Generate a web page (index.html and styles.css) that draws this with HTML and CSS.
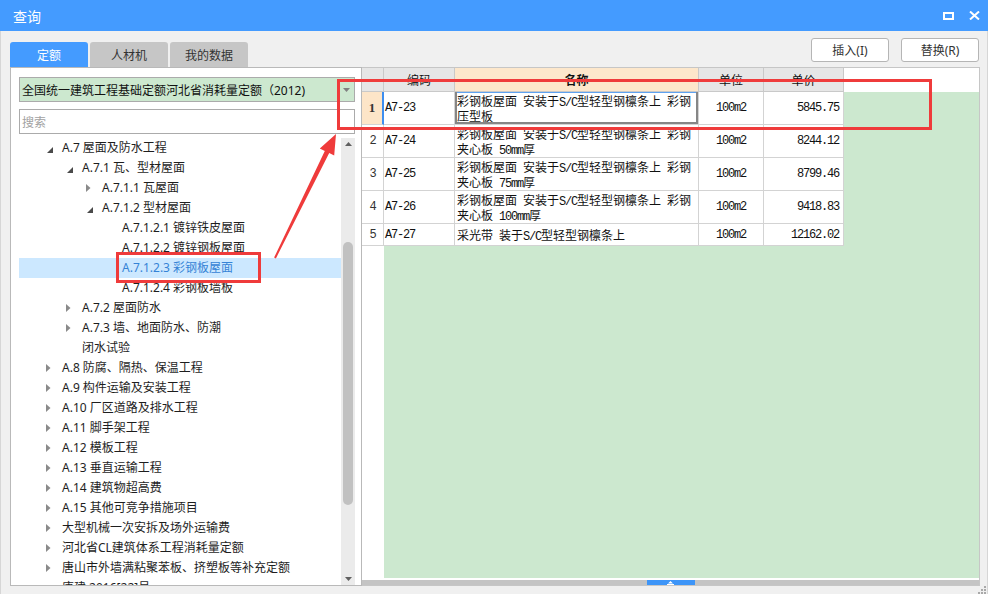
FILE: index.html
```html
<!DOCTYPE html>
<html lang="zh-CN">
<head>
<meta charset="utf-8">
<title>查询</title>
<link rel="stylesheet" href="styles.css">
</head>
<body>
<div class="win">
  <div class="titlebar">
    <span class="title">查询</span>
    <div class="winbtns">
      <svg width="11" height="8" viewBox="0 0 11 8"><rect x="1" y="1" width="9" height="6" fill="none" stroke="#fff" stroke-width="2"/></svg>
      <svg width="11" height="9" viewBox="0 0 11 9"><path d="M1 0.5L10 8.5M10 0.5L1 8.5" stroke="#fff" stroke-width="2" fill="none"/></svg>
    </div>
  </div>

  <div class="toolbar">
    <div class="tabs">
      <div class="tab active">定额</div>
      <div class="tab">人材机</div>
      <div class="tab">我的数据</div>
    </div>
    <div class="actions">
      <button class="btn">插入(I)</button>
      <button class="btn">替换(R)</button>
    </div>
  </div>

  <div class="content">
    <div class="lpanel">
      <div class="select">
        <span class="seltext">全国统一建筑工程基础定额河北省消耗量定额（2012)</span>
        <svg class="caret" width="7" height="4" viewBox="0 0 7 4"><path d="M0 0H7L3.5 4Z" fill="#808080"/></svg>
      </div>
      <div class="search"><span class="ph">搜索</span></div>
      <div class="tree">
        <div class="rows">
          <div class="node lv0"><span class="tw"><svg class="exp" width="6" height="6" viewBox="0 0 6 6"><path d="M6 0V6H0Z" fill="#4a4a4a"/></svg></span><span class="lbl">A.7 屋面及防水工程</span></div>
          <div class="node lv1"><span class="tw"><svg class="exp" width="6" height="6" viewBox="0 0 6 6"><path d="M6 0V6H0Z" fill="#4a4a4a"/></svg></span><span class="lbl">A.7.1 瓦、型材屋面</span></div>
          <div class="node lv2"><span class="tw"><svg width="5" height="8" viewBox="0 0 5 8"><path d="M0 0L4.5 4L0 8Z" fill="#8a8a8a"/></svg></span><span class="lbl">A.7.1.1 瓦屋面</span></div>
          <div class="node lv2"><span class="tw"><svg class="exp" width="6" height="6" viewBox="0 0 6 6"><path d="M6 0V6H0Z" fill="#4a4a4a"/></svg></span><span class="lbl">A.7.1.2 型材屋面</span></div>
          <div class="node lv3"><span class="tw"></span><span class="lbl">A.7.1.2.1 镀锌铁皮屋面</span></div>
          <div class="node lv3"><span class="tw"></span><span class="lbl">A.7.1.2.2 镀锌钢板屋面</span></div>
          <div class="node lv3 selected"><span class="tw"></span><span class="lbl">A.7.1.2.3 彩钢板屋面</span></div>
          <div class="node lv3"><span class="tw"></span><span class="lbl">A.7.1.2.4 彩钢板墙板</span></div>
          <div class="node lv1"><span class="tw"><svg width="5" height="8" viewBox="0 0 5 8"><path d="M0 0L4.5 4L0 8Z" fill="#8a8a8a"/></svg></span><span class="lbl">A.7.2 屋面防水</span></div>
          <div class="node lv1"><span class="tw"><svg width="5" height="8" viewBox="0 0 5 8"><path d="M0 0L4.5 4L0 8Z" fill="#8a8a8a"/></svg></span><span class="lbl">A.7.3 墙、地面防水、防潮</span></div>
          <div class="node lv1"><span class="tw"></span><span class="lbl">闭水试验</span></div>
          <div class="node lv0"><span class="tw"><svg width="5" height="8" viewBox="0 0 5 8"><path d="M0 0L4.5 4L0 8Z" fill="#8a8a8a"/></svg></span><span class="lbl">A.8 防腐、隔热、保温工程</span></div>
          <div class="node lv0"><span class="tw"><svg width="5" height="8" viewBox="0 0 5 8"><path d="M0 0L4.5 4L0 8Z" fill="#8a8a8a"/></svg></span><span class="lbl">A.9 构件运输及安装工程</span></div>
          <div class="node lv0"><span class="tw"><svg width="5" height="8" viewBox="0 0 5 8"><path d="M0 0L4.5 4L0 8Z" fill="#8a8a8a"/></svg></span><span class="lbl">A.10 厂区道路及排水工程</span></div>
          <div class="node lv0"><span class="tw"><svg width="5" height="8" viewBox="0 0 5 8"><path d="M0 0L4.5 4L0 8Z" fill="#8a8a8a"/></svg></span><span class="lbl">A.11 脚手架工程</span></div>
          <div class="node lv0"><span class="tw"><svg width="5" height="8" viewBox="0 0 5 8"><path d="M0 0L4.5 4L0 8Z" fill="#8a8a8a"/></svg></span><span class="lbl">A.12 模板工程</span></div>
          <div class="node lv0"><span class="tw"><svg width="5" height="8" viewBox="0 0 5 8"><path d="M0 0L4.5 4L0 8Z" fill="#8a8a8a"/></svg></span><span class="lbl">A.13 垂直运输工程</span></div>
          <div class="node lv0"><span class="tw"><svg width="5" height="8" viewBox="0 0 5 8"><path d="M0 0L4.5 4L0 8Z" fill="#8a8a8a"/></svg></span><span class="lbl">A.14 建筑物超高费</span></div>
          <div class="node lv0"><span class="tw"><svg width="5" height="8" viewBox="0 0 5 8"><path d="M0 0L4.5 4L0 8Z" fill="#8a8a8a"/></svg></span><span class="lbl">A.15 其他可竞争措施项目</span></div>
          <div class="node lv0"><span class="tw"><svg width="5" height="8" viewBox="0 0 5 8"><path d="M0 0L4.5 4L0 8Z" fill="#8a8a8a"/></svg></span><span class="lbl">大型机械一次安拆及场外运输费</span></div>
          <div class="node lv0"><span class="tw"><svg width="5" height="8" viewBox="0 0 5 8"><path d="M0 0L4.5 4L0 8Z" fill="#8a8a8a"/></svg></span><span class="lbl">河北省CL建筑体系工程消耗量定额</span></div>
          <div class="node lv0"><span class="tw"><svg width="5" height="8" viewBox="0 0 5 8"><path d="M0 0L4.5 4L0 8Z" fill="#8a8a8a"/></svg></span><span class="lbl">唐山市外墙满粘聚苯板、挤塑板等补充定额</span></div>
          <div class="node lv0"><span class="tw"></span><span class="lbl">唐建 2016[22]号</span></div>
        </div>
        <div class="vscroll">
          <div class="sarrow"><svg width="7" height="4" viewBox="0 0 7 4"><path d="M3.5 0L7 4H0Z" fill="#606060"/></svg></div>
          <div class="thumb"></div>
          <div class="sarrow down"><svg width="7" height="4" viewBox="0 0 7 4"><path d="M0 0H7L3.5 4Z" fill="#606060"/></svg></div>
        </div>
      </div>
    </div>

    <div class="rpanel">
      <div class="thead">
        <div class="hc c0"></div>
        <div class="hc c1">编码</div>
        <div class="hc c2 hsel">名称</div>
        <div class="hc c3">单位</div>
        <div class="hc c4">单价</div>
        <div class="hfill"></div>
      </div>
      <div class="tbody">
        <div class="rowset">
          <div class="tr tall">
            <div class="td c0 rn rn-sel">1</div>
            <div class="td c1 m code">A7-23</div>
            <div class="td c2 nm nm-sel"><span class="ln">彩钢板屋面<span class="m"> </span>安装于<span class="m">S/C</span>型轻型钢檩条上<span class="m"> </span>彩钢</span><span class="ln">压型板</span></div>
            <div class="td c3 m ctr">100m2</div>
            <div class="td c4 m rt">5845.75</div>
          </div>
          <div class="tr tall">
            <div class="td c0 rn m">2</div>
            <div class="td c1 m code">A7-24</div>
            <div class="td c2 nm"><span class="ln">彩钢板屋面<span class="m"> </span>安装于<span class="m">S/C</span>型轻型钢檩条上<span class="m"> </span>彩钢</span><span class="ln">夹心板<span class="m"> 50mm</span>厚</span></div>
            <div class="td c3 m ctr">100m2</div>
            <div class="td c4 m rt">8244.12</div>
          </div>
          <div class="tr tall">
            <div class="td c0 rn m">3</div>
            <div class="td c1 m code">A7-25</div>
            <div class="td c2 nm"><span class="ln">彩钢板屋面<span class="m"> </span>安装于<span class="m">S/C</span>型轻型钢檩条上<span class="m"> </span>彩钢</span><span class="ln">夹心板<span class="m"> 75mm</span>厚</span></div>
            <div class="td c3 m ctr">100m2</div>
            <div class="td c4 m rt">8799.46</div>
          </div>
          <div class="tr tall">
            <div class="td c0 rn m">4</div>
            <div class="td c1 m code">A7-26</div>
            <div class="td c2 nm"><span class="ln">彩钢板屋面<span class="m"> </span>安装于<span class="m">S/C</span>型轻型钢檩条上<span class="m"> </span>彩钢</span><span class="ln">夹心板<span class="m"> 100mm</span>厚</span></div>
            <div class="td c3 m ctr">100m2</div>
            <div class="td c4 m rt">9418.83</div>
          </div>
          <div class="tr short">
            <div class="td c0 rn m">5</div>
            <div class="td c1 m code">A7-27</div>
            <div class="td c2 nm one"><span class="ln">采光带<span class="m"> </span>装于<span class="m">S/C</span>型轻型钢檩条上</span></div>
            <div class="td c3 m ctr">100m2</div>
            <div class="td c4 m rt">12162.02</div>
          </div>
        </div>
      </div>
      <div class="hgap"></div>
      <div class="hbar">
        <div class="hthumb"><svg width="7" height="4" viewBox="0 0 7 4"><path d="M3.5 0L6 2.6H1Z M0 3H7V4H0Z" fill="#fff"/></svg></div>
      </div>
    </div>
  </div>

  <div class="statusbar">
    <svg class="grip" width="9" height="8" viewBox="0 0 9 8"><path d="M7 0h2v2h-2z M4 3h2v2h-2z M7 3h2v2h-2z M1 6h2v2h-2z M4 6h2v2h-2z M7 6h2v2h-2z" fill="#a9a9a9"/></svg>
  </div>

  <svg class="annot" width="988" height="594" viewBox="0 0 988 594">
    <rect x="338.5" y="80.5" width="592" height="48" fill="none" stroke="#ef3b3b" stroke-width="3"/>
    <rect x="117.5" y="253.5" width="142" height="28" fill="none" stroke="#ef3b3b" stroke-width="3"/>
    <polygon points="275.9,258.4 329.2,153.1 334.2,155.5 336,134 319.8,148.5 324.8,150.9 274.1,257.6" fill="#ef3b3b"/>
  </svg>
</div>
</body>
</html>
```

FILE: styles.css
```css
* { box-sizing: border-box; }
html, body { margin: 0; padding: 0; }
body {
  width: 988px;
  height: 594px;
  overflow: hidden;
  background: #f0f0f0;
  font-family: "Noto Sans", "Noto Sans CJK SC", sans-serif;
  font-size: 12px;
  color: #1a1a1a;
}
.win {
  position: relative;
  width: 988px;
  height: 594px;
  display: flex;
  flex-direction: column;
  border-left: 1px solid #d6d6d6;
  border-right: 1px solid #d6d6d6;
}
.titlebar {
  height: 31px;
  flex: none;
  margin: 0 -1px;
  background: #449bff;
  color: #fff;
  display: flex;
  align-items: center;
  padding: 0 8px 0 13px;
}
.title {
  font-family: "Noto Sans CJK SC", sans-serif;
  font-size: 14px;
  line-height: 1;
}
.winbtns {
  margin-left: auto;
  display: flex;
  align-items: center;
  gap: 15px;
}

.toolbar {
  height: 36px;
  flex: none;
  display: flex;
  justify-content: space-between;
}
.tabs {
  align-self: flex-end;
  display: flex;
  gap: 2px;
  padding-left: 9px;
}
.tab {
  width: 78px;
  height: 25px;
  border-radius: 3px 3px 0 0;
  background: #c6c6c6;
  color: #333;
  display: flex;
  align-items: center;
  justify-content: center;
  font-size: 12px;
}
.tab.active { background: #449bff; color: #fff; }
.actions {
  display: flex;
  align-items: flex-start;
  gap: 12px;
  padding: 7px 8px 0 0;
}
.btn {
  width: 78px;
  height: 24px;
  padding: 0;
  border: 1px solid #b5b5b5;
  border-radius: 3px;
  background: #fff;
  color: #333;
  font: 12px "Noto Sans", "Noto Sans CJK SC", sans-serif;
}

.content {
  height: 519px;
  flex: none;
  display: flex;
  padding-left: 9px;
}

/* left panel */
.lpanel {
  width: 352px;
  height: 519px;
  background: #fff;
  border: 1px solid #b9b9b9;
  display: flex;
  flex-direction: column;
}
.select {
  margin: 9px 6px 0 8px;
  height: 25px;
  flex: none;
  background: #cce8cf;
  border: 1px solid #ababab;
  display: flex;
  align-items: center;
  padding-left: 2px;
}
.seltext { white-space: nowrap; color: #111; }
.caret { margin-left: auto; margin-right: 4px; }
.search {
  margin: 7px 6px 0 8px;
  height: 25px;
  flex: none;
  border: 1px solid #ababab;
  display: flex;
  align-items: center;
  padding-left: 2px;
}
.ph { color: #a2a2a2; }
.tree {
  margin: 4px 6px 0 8px;
  flex: 1;
  min-height: 0;
  display: flex;
  overflow: hidden;
}
.rows {
  flex: 1;
  min-width: 0;
  overflow: hidden;
}
.node {
  height: 20px;
  display: flex;
  align-items: center;
  white-space: nowrap;
  color: #1e1e1e;
}
.lv0 { padding-left: 19px; }
.lv1 { padding-left: 39px; }
.lv2 { padding-left: 59px; }
.lv3 { padding-left: 79px; }
.tw {
  width: 20px;
  height: 20px;
  flex: none;
  display: flex;
  align-items: center;
  justify-content: center;
}
.tw .exp { margin-left: 4px; margin-top: 4px; }
.lbl { margin-left: 4px; line-height: 20px; }
.node.selected { background: #cce8ff; }
.node.selected .lbl { color: #3583d6; }

.vscroll {
  width: 14px;
  flex: none;
  background: #ebebeb;
  display: flex;
  flex-direction: column;
  align-items: center;
}
.sarrow {
  height: 12px;
  flex: none;
  display: flex;
  align-items: center;
  justify-content: center;
}
.sarrow.down { margin-top: auto; }
.thumb {
  width: 10px;
  height: 263px;
  margin-top: 92px;
  border-radius: 5px;
  background: #c1c1c1;
}

/* right panel */
.rpanel {
  width: 618px;
  height: 519px;
  background: #fff;
  border-top: 1px solid #c6c6c6;
  border-right: 1px solid #c6c6c6;
  border-bottom: 1px solid #c6c6c6;
  display: flex;
  flex-direction: column;
}
.thead {
  height: 24px;
  flex: none;
  display: flex;
}
.hc {
  height: 24px;
  background: #e6e6e6;
  border-right: 1px solid #c9c9c9;
  border-bottom: 1px solid #c9c9c9;
  display: flex;
  align-items: center;
  justify-content: center;
  font-family: "Noto Sans CJK SC", sans-serif;
  color: #111;
}
.hc.hsel { background: #fde7cb; font-weight: bold; }
.hfill { flex: 1; }
.c0 { width: 22px; flex: none; }
.c1 { width: 71px; flex: none; }
.c2 { width: 244px; flex: none; }
.c3 { width: 65px; flex: none; }
.c4 { width: 80px; flex: none; }

.tbody {
  flex: 1;
  min-height: 0;
  background: linear-gradient(to right, #fff 22px, #cce8cf 22px);
}
.rowset {
  width: 482px;
  background: #fff;
}
.tr { display: flex; }
.tr.tall { height: 33px; }
.tr.short { height: 22px; }
.td {
  border-right: 1px solid #d3d3d3;
  border-bottom: 1px solid #d3d3d3;
  display: flex;
  align-items: center;
  color: #111;
}
.m {
  font-family: "Liberation Mono", monospace;
  letter-spacing: -1.2px;
}
.rn { justify-content: center; color: #333; }
.rn-sel {
  background: #fde5c8;
  border-right: 2px solid #3d8ef0;
  font-family: "Liberation Serif", serif;
  font-weight: bold;
  font-size: 13px;
}
.code { padding-left: 1px; }
.nm {
  display: block;
  padding: 1px 2px 0;
  font-family: "Noto Sans CJK SC", sans-serif;
}
.nm.one { padding-top: 3px; }
.ln {
  display: block;
  height: 15px;
  line-height: 15px;
  white-space: nowrap;
}
.nm-sel {
  box-shadow: inset 2px 0 #868686, inset -2px 0 #868686, inset 0 -2px #868686, inset 0 1px #5ea2f0;
}
.ctr { justify-content: center; }
.rt { justify-content: flex-end; padding-right: 4px; }

.hgap { height: 2px; flex: none; }
.hbar {
  height: 5px;
  flex: none;
  background: #c4c4c4;
  display: flex;
  justify-content: center;
}
.hthumb {
  width: 48px;
  height: 5px;
  background: #3d95f8;
  display: flex;
  align-items: flex-end;
  justify-content: center;
}
.hthumb svg { display: block; }

.statusbar {
  height: 8px;
  flex: none;
  display: flex;
  justify-content: flex-end;
  align-items: flex-end;
  padding-right: 1px;
}
.grip { display: block; }

.annot {
  position: absolute;
  left: -1px;
  top: 0;
  pointer-events: none;
}
```
